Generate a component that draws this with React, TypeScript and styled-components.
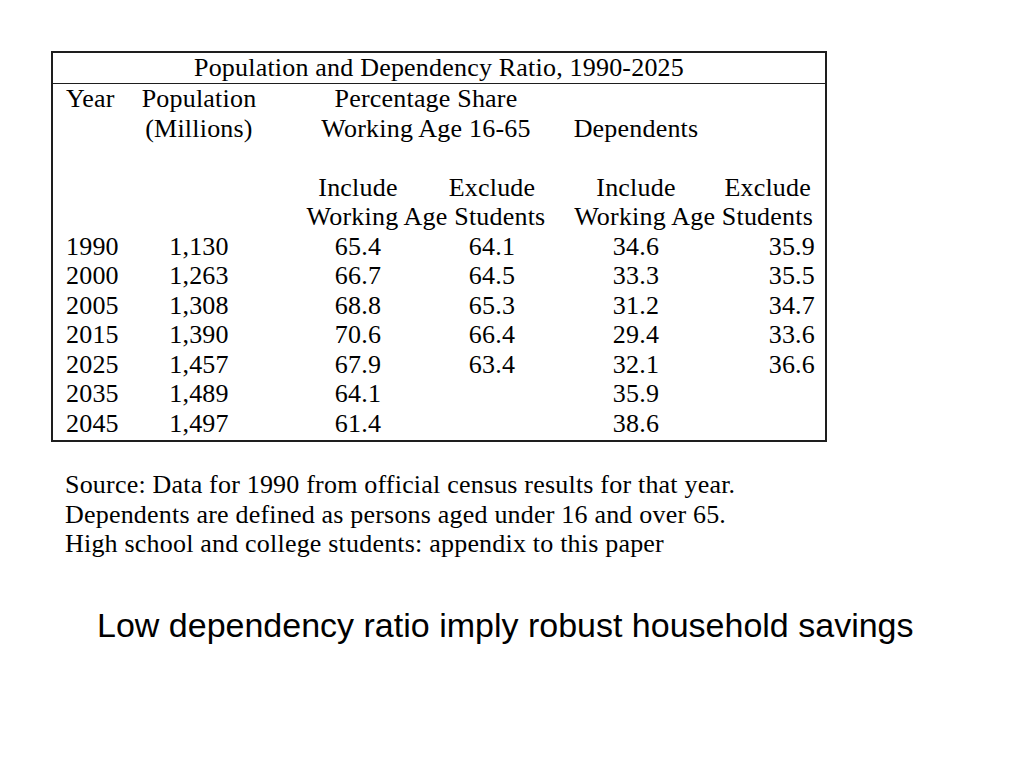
import React from "react";
import styled, { createGlobalStyle } from "styled-components";

const Global = createGlobalStyle`
  html, body { margin: 0; padding: 0; background: #ffffff; }
  body { font-family: "Liberation Serif", "Times New Roman", serif; color: #000; }
`;

const Page = styled.main`
  width: 1024px;
  height: 768px;
  box-sizing: border-box;
  padding-top: 51px;
  display: flex;
  flex-direction: column;
`;

const Table = styled.section`
  margin-left: 51px;
  width: 776px;
  box-sizing: border-box;
  border: 2px solid #1e1e1e;
  font-size: 26px;
  letter-spacing: 0.2px;
  line-height: 29.5px;
  padding-bottom: 2px;
`;

const Title = styled.div`
  text-align: center;
  height: 30px;
  line-height: 30px;
  border-bottom: 1px solid #1e1e1e;
`;

const Body = styled.div`
  display: flex;
  flex-direction: column;
`;

const Row = styled.div`
  display: grid;
  grid-template-columns: 77px 138px 180px 88px 200px 89px;
  height: 29.5px;
`;

type Align = "left" | "center" | "right";

const Cell = styled.div<{ $col: number; $span?: number; $align?: Align; $pl?: number; $pr?: number }>`
  grid-column: ${(p) => p.$col} / span ${(p) => p.$span ?? 1};
  display: flex;
  justify-content: ${(p) =>
    p.$align === "left" ? "flex-start" : p.$align === "right" ? "flex-end" : "center"};
  padding-left: ${(p) => p.$pl ?? 0}px;
  padding-right: ${(p) => p.$pr ?? 0}px;
  white-space: nowrap;
`;

const Notes = styled.div`
  margin-top: 28px;
  margin-left: 65px;
  font-size: 26px;
  letter-spacing: 0.2px;
  line-height: 29.5px;
`;

const Caption = styled.p`
  margin: 47px 0 0 97px;
  font-family: "Liberation Sans", Arial, sans-serif;
  font-size: 34px;
  line-height: 39px;
`;

const rows: [string, string, string, string, string, string][] = [
  ["1990", "1,130", "65.4", "64.1", "34.6", "35.9"],
  ["2000", "1,263", "66.7", "64.5", "33.3", "35.5"],
  ["2005", "1,308", "68.8", "65.3", "31.2", "34.7"],
  ["2015", "1,390", "70.6", "66.4", "29.4", "33.6"],
  ["2025", "1,457", "67.9", "63.4", "32.1", "36.6"],
  ["2035", "1,489", "64.1", "", "35.9", ""],
  ["2045", "1,497", "61.4", "", "38.6", ""],
];

export default function App() {
  return (
    <>
      <Global />
      <Page>
        <Table>
          <Title>Population and Dependency Ratio, 1990-2025</Title>
          <Body>
            <Row>
              <Cell $col={1} $align="left" $pl={13}>Year</Cell>
              <Cell $col={2}>Population</Cell>
              <Cell $col={3} $span={2} $pl={48}>Percentage Share</Cell>
            </Row>
            <Row>
              <Cell $col={2}>(Millions)</Cell>
              <Cell $col={3} $span={2} $pl={48}>Working Age 16-65</Cell>
              <Cell $col={5}>Dependents</Cell>
            </Row>
            <Row />
            <Row>
              <Cell $col={3}>Include</Cell>
              <Cell $col={4}>Exclude</Cell>
              <Cell $col={5}>Include</Cell>
              <Cell $col={6} $align="right" $pr={14}>Exclude</Cell>
            </Row>
            <Row>
              <Cell $col={3} $span={2} $pl={48}>Working Age Students</Cell>
              <Cell $col={5} $span={2} $align="right" $pr={12}>Working Age Students</Cell>
            </Row>
            {rows.map((r) => (
              <Row key={r[0]}>
                <Cell $col={1} $align="left" $pl={13}>{r[0]}</Cell>
                <Cell $col={2}>{r[1]}</Cell>
                <Cell $col={3}>{r[2]}</Cell>
                <Cell $col={4}>{r[3]}</Cell>
                <Cell $col={5}>{r[4]}</Cell>
                <Cell $col={6} $align="right" $pr={10}>{r[5]}</Cell>
              </Row>
            ))}
          </Body>
        </Table>
        <Notes>
          Source: Data for 1990 from official census results for that year.
          <br />
          Dependents are defined as persons aged under 16 and over 65.
          <br />
          High school and college students: appendix to this paper
        </Notes>
        <Caption>Low dependency ratio imply robust household savings</Caption>
      </Page>
    </>
  );
}
